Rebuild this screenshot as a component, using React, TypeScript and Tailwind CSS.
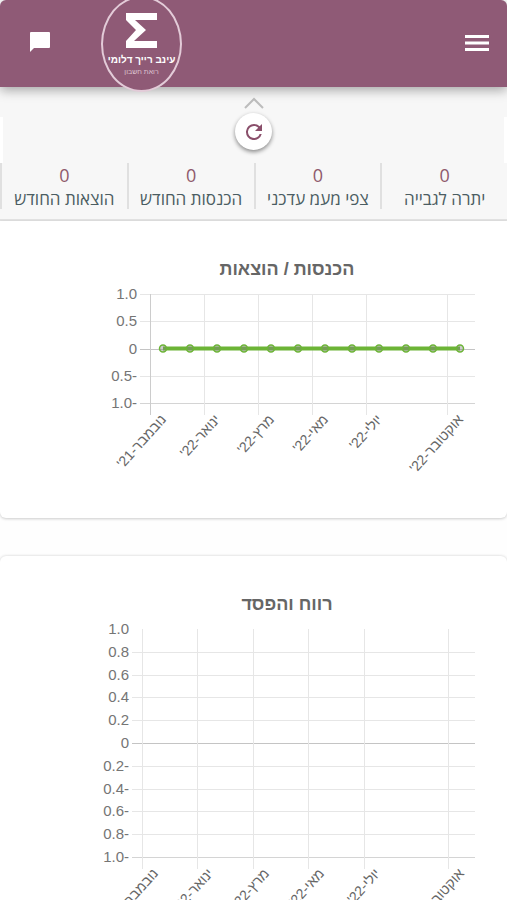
const stats = [
  { label: 'יתרה לגבייה', value: 0 },
  { label: 'צפי מעמ עדכני', value: 0 },
  { label: 'הכנסות החודש', value: 0 },
  { label: 'הוצאות החודש', value: 0 },
]

const months = ["נובמבר-21'", "ינואר-22'", "מרץ-22'", "מאי-22'", "יולי-22'", "אוקטובר-22'"]

type ChartProps = {
  title: string
  ticks: string[]
  columns: number[]
  left: number
  plotHeight: number
  points?: number[]
  hideTopLine?: boolean
}

function Chart({ title, ticks, columns, left, plotHeight, points, hideTopLine }: ChartProps) {
  const top = 6
  const step = plotHeight / (ticks.length - 1)
  const bottom = top + plotHeight
  const zero = top + plotHeight / 2

  return (
    <div className="pl-[99px] pr-8">
      <h2 className="text-center text-lg leading-6 font-bold text-[#666]">{title}</h2>
      <svg
        viewBox={`0 0 376 ${bottom + 96}`}
        className="mt-[7px] block w-full overflow-visible"
        role="img"
        aria-label={title}
      >
        {/* Horizontal grid and values */}
        {ticks.map((tick, i) => {
          const y = Math.round(top + i * step) + 0.5
          return (
            <g key={tick}>
              {!(hideTopLine && i === 0) && (
                <line
                  x1={left - 10}
                  x2={376}
                  y1={y}
                  y2={y}
                  stroke={tick === '0' ? '#c4c4c4' : i === ticks.length - 1 ? '#d4d4d4' : '#e6e6e6'}
                />
              )}
              <text x={left - 13} y={y + 4} direction="rtl" fontSize="15" fill="#757575">{tick}</text>
            </g>
          )
        })}

        {/* Vertical grid and months */}
        {columns.map((x, i) => (
          <g key={months[i]}>
            <line
              x1={x + 0.5}
              x2={x + 0.5}
              y1={top}
              y2={bottom + 12}
              stroke={i === 0 && points ? '#ccc' : '#e6e6e6'}
            />
            <text
              transform={`translate(${x + 17} ${bottom + 17}) rotate(-48)`}
              direction="rtl"
              fontSize="14"
              fill="#666"
            >
              {months[i]}
            </text>
          </g>
        ))}

        {points && (
          <g stroke="#6cb436">
            <line x1={points[0]} x2={points[points.length - 1]} y1={zero} y2={zero} strokeWidth="4" />
            {points.map((x) => (
              <circle key={x} cx={x} cy={zero} r="3.5" fill="#808080" fillOpacity="0.4" strokeWidth="1.5" />
            ))}
          </g>
        )}
      </svg>
    </div>
  )
}

export default function App() {
  return (
    <div dir="rtl" className="h-screen overflow-hidden bg-[#fefefe] font-['Liberation_Sans',Arial,sans-serif]">
      {/* Header */}
      <header className="relative z-10 flex h-[87px] items-center justify-between rounded-t-md bg-[#8f5a76] px-[18px] shadow-[0_3px_12px_rgba(0,0,0,0.35)]">
        <button aria-label="תפריט" className="text-white">
          <svg width="24" height="18" viewBox="0 0 24 18" className="block" fill="currentColor">
            <path d="M0 0h24v3H0zM0 6.5h24v3H0zM0 13h24v3H0z" />
          </svg>
        </button>
        <button aria-label="הודעות" className="mx-3 mb-1 text-white">
          <svg width="20" height="20" viewBox="0 0 20 20" className="block" fill="currentColor">
            <path d="M1 0h18a1 1 0 0 1 1 1v14a1 1 0 0 1-1 1H4l-4 4V1a1 1 0 0 1 1-1z" />
          </svg>
        </button>
        <a
          href="#"
          className="absolute -top-1 left-[101px] flex h-24 w-[81px] flex-col items-center rounded-[50%] border-2 border-[#e3cbd8] bg-[#8f5a76] text-white"
        >
          <svg width="32" height="35" viewBox="0 0 32 35" className="mt-[15px] block" fill="currentColor">
            <path d="M0 0h31v7H9l11 10-12 11h23v7H0v-7l10-11L0 7z" />
          </svg>
          <span className="mt-[5px] text-[10px] leading-[14px] font-bold whitespace-nowrap">עינב רייך דלומי</span>
          <span className="text-[7px] leading-[10px] whitespace-nowrap text-[#dcc3d0]">רואת חשבון</span>
        </a>
      </header>

      {/* Summary */}
      <section className="border-b-2 border-[#e2e2e2] bg-[#f7f7f7]">
        <div className="flex h-[30px] justify-center pt-2.5">
          <svg width="20" height="12" viewBox="0 0 20 12" fill="none" stroke="#bdbdbd" strokeWidth="2">
            <path d="M1 11l9-9 9 9" />
          </svg>
        </div>
        <div className="flex h-[46px] justify-center border-x-[3px] border-white">
          <button
            aria-label="רענון"
            className="-mt-1 flex h-[37px] w-[37px] items-center justify-center rounded-full bg-white text-[#8a4f6b] shadow-[0_2px_4px_rgba(0,0,0,0.45)]"
          >
            <svg width="24" height="24" viewBox="0 0 24 24" fill="currentColor">
              <path d="M17.65 6.35A7.96 7.96 0 0 0 12 4a8 8 0 1 0 7.73 10h-2.08A6 6 0 1 1 12 6c1.66 0 3.14.69 4.22 1.78L13 11h7V4z" />
            </svg>
          </button>
        </div>
        <dl className="grid grid-cols-4 pb-2.5 font-['Open_Sans','Liberation_Sans',sans-serif]">
          {stats.map((stat) => (
            <div key={stat.label} className="flex h-[46px] flex-col-reverse items-center justify-end border-l-2 border-[#e0e0e0]">
              <dt className="text-[17px] leading-6 whitespace-nowrap text-[#4b5d62]">{stat.label}</dt>
              <dd className="text-lg leading-6 text-[#8f5a6c]">{stat.value}</dd>
            </div>
          ))}
        </dl>
      </section>

      {/* Charts */}
      <main dir="ltr" className="flex flex-col gap-[38px]">
        <section className="h-[297px] rounded-b-md bg-white pt-9 shadow-[0_1px_3px_rgba(0,0,0,0.2)]">
          <Chart
            title="הכנסות / הוצאות"
            ticks={['1.0', '0.5', '0', '-0.5', '-1.0']}
            columns={[51, 105, 159, 213, 267, 348]}
            left={51}
            plotHeight={109}
            points={[64, 91, 118, 145, 172, 199, 226, 253, 280, 307, 334, 361]}
          />
        </section>
        <section className="rounded-t-md bg-white pt-9 shadow-[0_0_3px_rgba(0,0,0,0.2)]">
          <Chart
            title="רווח והפסד"
            ticks={['1.0', '0.8', '0.6', '0.4', '0.2', '0', '-0.2', '-0.4', '-0.6', '-0.8', '-1.0']}
            columns={[43, 98, 154, 209, 265, 349]}
            left={43}
            plotHeight={228}
            hideTopLine
          />
        </section>
      </main>
    </div>
  )
}
